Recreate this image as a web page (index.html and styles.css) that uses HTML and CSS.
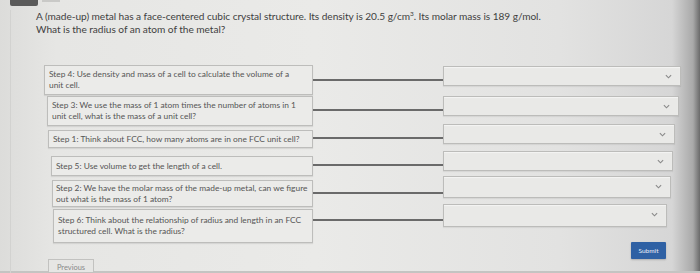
FILE: index.html
```html
<!DOCTYPE html>
<html>
<head>
<meta charset="utf-8">
<link rel="stylesheet" href="styles.css">
</head>
<body>
<div class="page">
  <div class="tabbar"><span class="tab"></span><span class="tab-label">&nbsp;</span></div>
  <div class="panel">
    <p class="question">A (made-up) metal has a face-centered cubic crystal structure. Its density is 20.5 g/cm<sup>3</sup>. Its molar mass is 189 g/mol.<br>What is the radius of an atom of the metal?</p>
    <div class="match">
      <div class="steps">
        <div class="step s1">Step 4: Use density and mass of a cell to calculate the volume of a unit cell.</div>
        <div class="step s2">Step 3: We use the mass of 1 atom times the number of atoms in 1 unit cell, what is the mass of a unit cell?</div>
        <div class="step s3">Step 1: Think about FCC, how many atoms are in one FCC unit cell?</div>
        <div class="step s4">Step 5: Use volume to get the length of a cell.</div>
        <div class="step s5">Step 2: We have the molar mass of the made-up metal, can we figure out what is the mass of 1 atom?</div>
        <div class="step s6">Step 6: Think about the relationship of radius and length in an FCC structured cell. What is the radius?</div>
      </div>
      <div class="targets">
        <div class="target t1"><span class="wire"></span><div class="select"><svg class="chev" viewBox="0 0 8 5"><polyline points="1,1 4,4 7,1"/></svg></div></div>
        <div class="target t2"><span class="wire"></span><div class="select"><svg class="chev" viewBox="0 0 8 5"><polyline points="1,1 4,4 7,1"/></svg></div></div>
        <div class="target t3"><span class="wire"></span><div class="select"><svg class="chev" viewBox="0 0 8 5"><polyline points="1,1 4,4 7,1"/></svg></div></div>
        <div class="target t4"><span class="wire"></span><div class="select"><svg class="chev" viewBox="0 0 8 5"><polyline points="1,1 4,4 7,1"/></svg></div></div>
        <div class="target t5"><span class="wire"></span><div class="select"><svg class="chev" viewBox="0 0 8 5"><polyline points="1,1 4,4 7,1"/></svg></div></div>
        <div class="target t6"><span class="wire"></span><div class="select"><svg class="chev" viewBox="0 0 8 5"><polyline points="1,1 4,4 7,1"/></svg></div></div>
      </div>
    </div>
    <div class="actions">
      <button class="submit">Submit</button>
    </div>
    <div class="nav">
      <button class="previous">Previous</button>
    </div>
  </div>
</div>
</body>
</html>
```
FILE: styles.css
```css
html, body {
  margin: 0;
  padding: 0;
  height: 273px;
  overflow: hidden;
}
body {
  font-family: Lato, "Liberation Sans", sans-serif;
  background: linear-gradient(90deg, #dcdcda 0%, #e6e6e4 8%, #eaeae8 45%, #e2e2e1 80%, #d6d6d6 96%, #a9a9a9 99%, #6a6a6a 100%);
}
.page {
  position: relative;
  height: 271px;
  border-bottom: 2px solid #c4c4c2;
}
.tabbar {
  display: flex;
  height: 6px;
  padding-left: 10px;
  gap: 4px;
}
.tab {
  width: 28px;
  height: 6px;
  background: #5a5a5a;
  border-radius: 0 0 2px 2px;
}
.tab-label {
  width: 18px;
  height: 2px;
  background: #c9c9c7;
}
.panel {
  margin-left: 10px;
  border-left: 1px solid #d2d2d0;
  height: 265px;
}
.question {
  margin: 4px 0 0 25px;
  font-size: 10.15px;
  line-height: 13px;
  color: #3f3f3f;
  letter-spacing: -0.05px;
}
.question sup {
  font-size: 6.5px;
  line-height: 0;
}
.match {
  display: flex;
  margin-top: 29px;
  margin-left: 33px;
}
.steps {
  display: flex;
  flex-direction: column;
  width: 269px;
}
.step {
  box-sizing: border-box;
  background: #ebebe9;
  border: 1px solid #bdbdbb;
  box-shadow: 0 1px 1px rgba(0, 0, 0, 0.08);
  font-size: 8.4px;
  line-height: 11px;
  color: #555;
  padding: 3px 8px 3px 4px;
}
.s1 { height: 30px; margin-left: 0; }
.s2 { height: 30px; margin-left: 3px; margin-top: 1px; padding-right: 4px; }
.s3 { height: 18px; margin-left: 4px; margin-top: 4px; padding-top: 3px; padding-right: 2px; }
.s4 { height: 20px; margin-left: 7px; margin-top: 8px; padding-top: 4px; }
.s5 { height: 27px; margin-left: 8px; margin-top: 4px; padding: 2px 0 2px 3px; line-height: 10.5px; }
.s6 { height: 34px; margin-left: 9px; margin-top: 2px; padding-top: 5px; }
.targets {
  display: flex;
  flex-direction: column;
}
.target {
  display: flex;
  align-items: flex-start;
}
.wire {
  display: block;
  width: 130px;
  height: 1.5px;
  margin-top: 13px;
  background: #6a6a6a;
}
.select {
  box-sizing: border-box;
  position: relative;
  height: 20px;
  width: 238px;
  background: #e9e9e7;
  border: 1px solid #bcbcba;
  box-shadow: inset 0 1px 1px rgba(255, 255, 255, 0.5), 0 1px 1px rgba(0, 0, 0, 0.06);
}
.chev {
  position: absolute;
  right: 8px;
  top: 7px;
  width: 7px;
  height: 5px;
  fill: none;
  stroke: #8a8a8a;
  stroke-width: 1.3;
}
.t1 { margin-top: 1px; }
.t1 .select { width: 238px; }
.t2 { margin-top: 10px; }
.t2 .select { width: 236px; }
.t3 { margin-top: 8px; }
.t3 .select { width: 232px; }
.t4 { margin-top: 7px; }
.t4 .select { width: 230px; }
.t5 { margin-top: 5px; }
.t5 .select { width: 228px; height: 22px; }
.t5 .wire { margin-top: 16px; }
.t6 { margin-top: 6px; }
.t6 .select { width: 224px; height: 23px; }
.t6 .wire { margin-top: 15px; }
.actions {
  display: flex;
  justify-content: flex-end;
  width: 655px;
  margin-top: -1px;
}
.submit {
  width: 35px;
  height: 17px;
  padding: 0;
  border: none;
  border-radius: 1px;
  background: #2f61a4;
  color: #e8eef8;
  font-family: Lato, "Liberation Sans", sans-serif;
  font-size: 6.5px;
  box-shadow: 0 1px 2px rgba(0, 0, 0, 0.2);
}
.nav {
  display: flex;
  margin-top: 0;
  margin-left: 37px;
}
.previous {
  width: 46px;
  height: 14px;
  padding: 3px 0 0;
  border: 1px solid #c2c2c0;
  background: #e6e6e4;
  color: #8a8a8a;
  font-family: Lato, "Liberation Sans", sans-serif;
  font-size: 7.5px;
  text-align: center;
  vertical-align: top;
  display: block;
  line-height: 8px;
}
```
